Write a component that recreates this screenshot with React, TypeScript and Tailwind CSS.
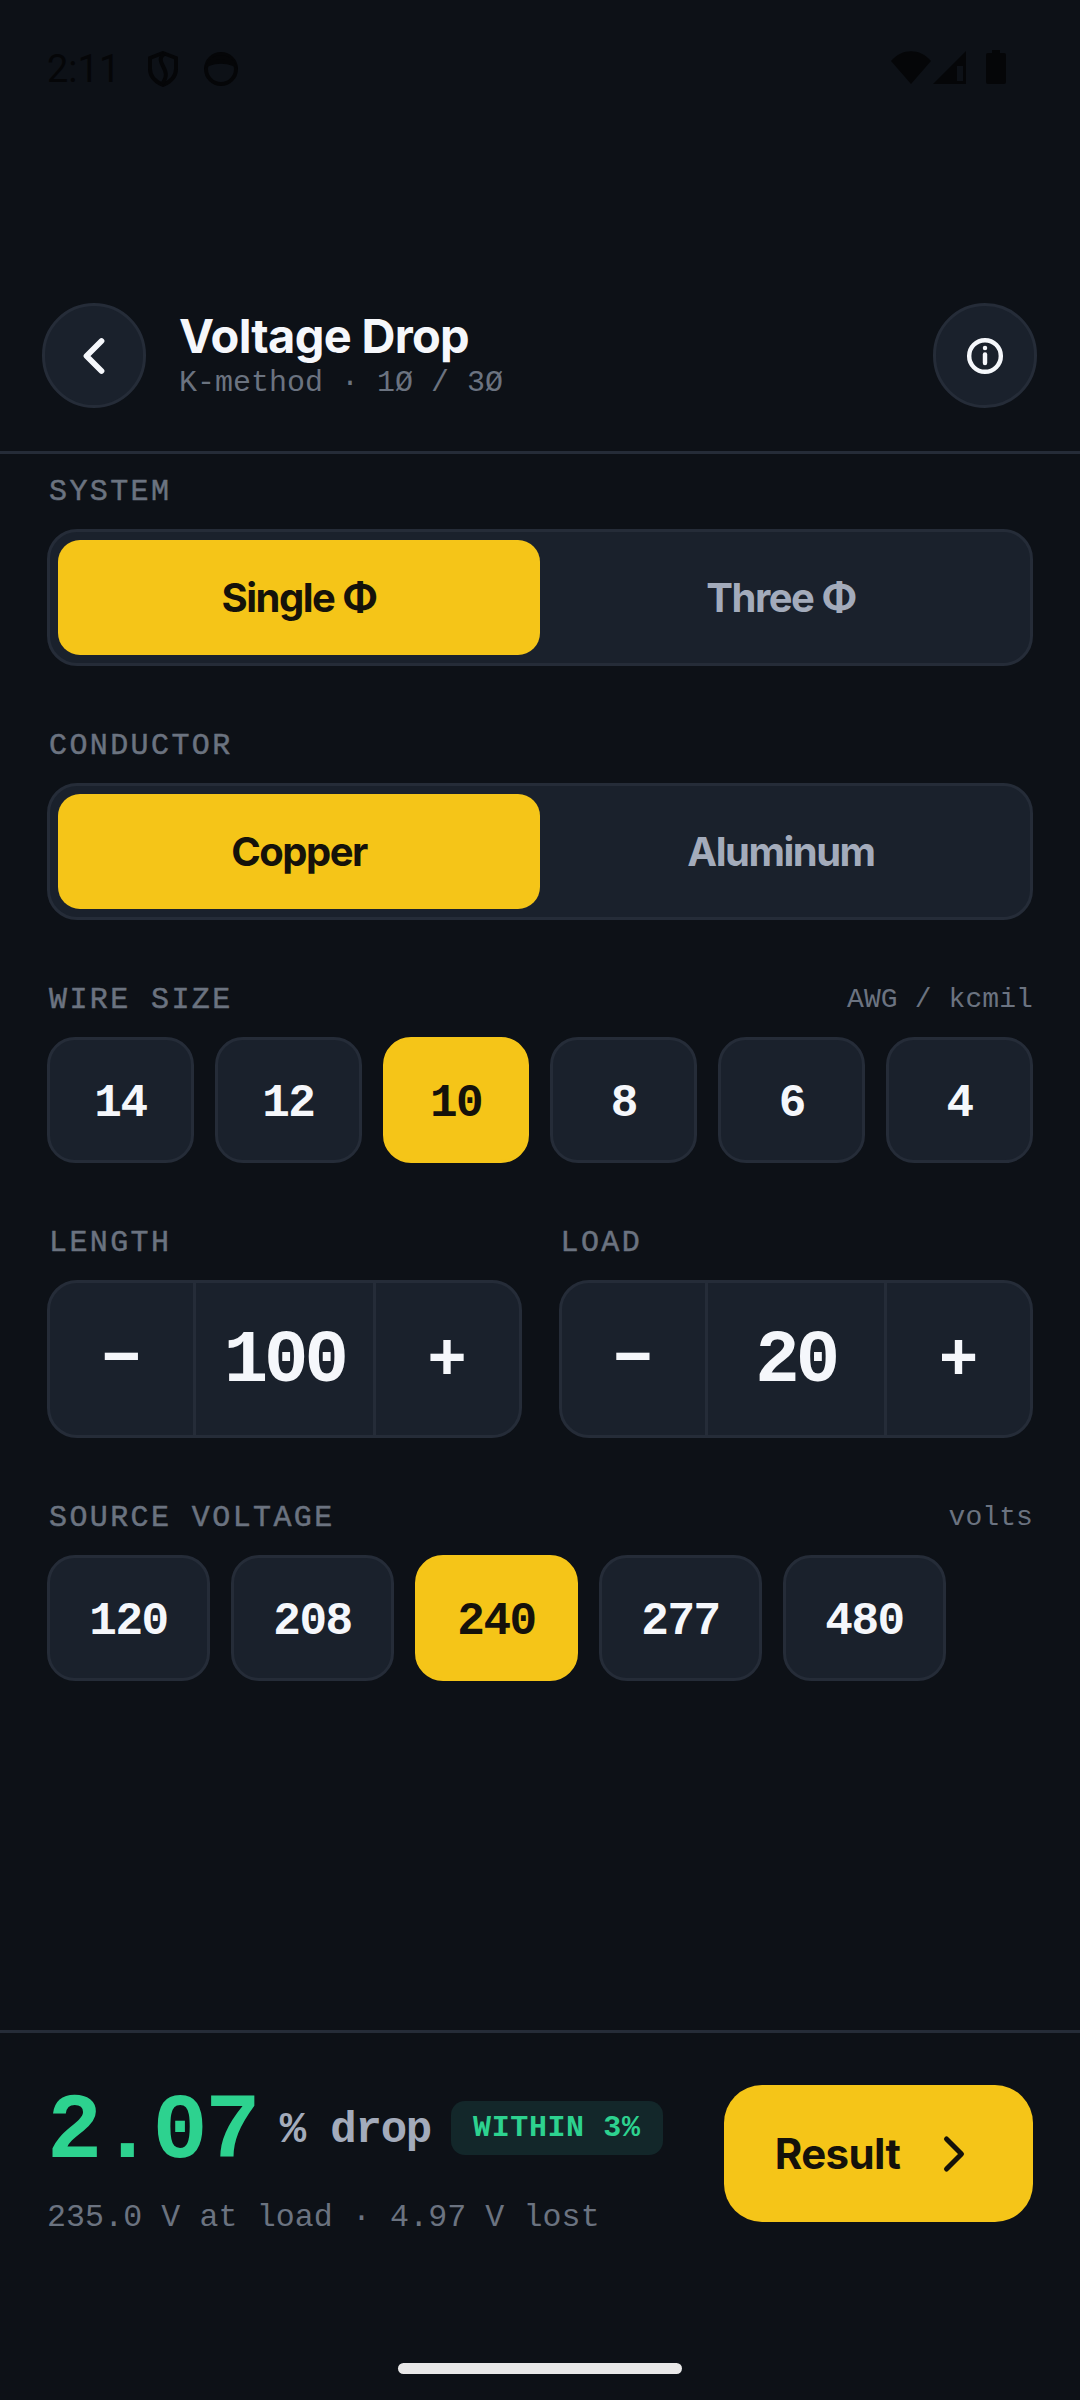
import { ChevronLeft, ChevronRight } from "lucide-react";

const sans = "font-['Inter','Liberation_Sans',sans-serif]";
const mono = "font-['Liberation_Mono',monospace]";

function StatusBar() {
  return (
    <div className="h-[140px] pt-[50px] pl-[47px] pr-[74px] flex items-start justify-between text-[#050608]">
      <div className="flex items-center">
        <span className="font-['Roboto',sans-serif] text-[38px] leading-[38px] w-[101px]">2:11</span>
        <svg width="30" height="36" viewBox="0 0 30 36" fill="none" stroke="currentColor" strokeWidth="4">
          <path d="M15 2 L28 7 V18 C28 26 22 31 15 34 C8 31 2 26 2 18 V7 Z" />
          <path d="M16 3 C5 12 26 18 14 33" />
        </svg>
        <svg className="ml-[26px]" width="34" height="34" viewBox="0 0 34 34" fill="none" stroke="currentColor" strokeWidth="4">
          <circle cx="17" cy="17" r="15" />
          <path d="M5 12 C10 3 24 3 29 12 C22 9 12 9 5 12 Z" fill="currentColor" />
        </svg>
      </div>
      <div className="flex items-center">
        <svg width="40" height="33" viewBox="0 0 40 33" fill="currentColor">
          <path d="M0 10 C11 -3 29 -3 40 10 L20 33 Z" />
        </svg>
        <svg className="ml-[2px]" width="34" height="33" viewBox="0 0 34 33" fill="currentColor">
          <path fillRule="evenodd" d="M33 0 V33 H0 Z M30 15 H24 V30 H30 Z" />
        </svg>
        <svg className="ml-[19px]" width="20" height="34" viewBox="0 0 20 34" fill="currentColor">
          <path d="M6 0 H14 V3 H18 Q20 3 20 5 V32 Q20 34 18 34 H2 Q0 34 0 32 V5 Q0 3 2 3 H6 Z" />
        </svg>
      </div>
    </div>
  );
}

function Label({ text, hint }: { text: string; hint?: string }) {
  return (
    <div className="flex items-center justify-between h-[36px] mb-[21px]">
      <span className={`${mono} text-[30px] leading-[36px] tracking-[2.4px] text-[#6b7380] pl-[2px] pt-[3px] [-webkit-text-stroke:0.5px_#6b7380]`}>{text}</span>
      {hint && <span className={`${mono} text-[28px] leading-[36px] pt-[3px] tracking-[0.1px] text-[#6b7380]`}>{hint}</span>}
    </div>
  );
}

function Segmented({ options }: { options: string[] }) {
  return (
    <div className="h-[137px] p-[8px] flex rounded-[30px] border-[3px] border-[#252c38] bg-[#1a212c]">
      {options.map((opt, i) => (
        <div
          key={opt}
          className={`flex-1 flex items-center justify-center rounded-[22px] ${sans} text-[40px] font-bold tracking-[-1.5px] ${
            i === 0 ? "bg-[#f5c518] text-[#15120a]" : "text-[#a3abbb]"
          }`}
        >
          {opt}
        </div>
      ))}
    </div>
  );
}

function Chip({ value, active, className }: { value: string; active?: boolean; className: string }) {
  return (
    <div
      className={`h-[126px] pt-[8px] flex items-center justify-center rounded-[28px] border-[3px] ${mono} text-[46px] tracking-[-1.5px] font-bold ${className} ${
        active ? "bg-[#f5c518] border-[#f5c518] text-[#15120a]" : "bg-[#1a212c] border-[#252c38] text-[#f5f7fb]"
      }`}
    >
      {value}
    </div>
  );
}

function Stepper({ value }: { value: string }) {
  return (
    <div className={`h-[158px] flex rounded-[30px] border-[3px] border-[#252c38] bg-[#1a212c] text-[#f5f7fb] ${mono} font-bold`}>
      <div className="w-[146px] pt-[3px] flex items-center justify-center text-[66px] border-r-[3px] border-[#252c38]">−</div>
      <div className="flex-1 pt-[5px] flex items-center justify-center text-[74px] tracking-[-4px]">{value}</div>
      <div className="w-[146px] pt-[4px] flex items-center justify-center text-[66px] border-l-[3px] border-[#252c38]">+</div>
    </div>
  );
}

export default function App() {
  return (
    <div className="w-[1080px] h-[2400px] flex flex-col bg-[#0d1117]">
      <StatusBar />

      {/* Header */}
      <header className="pt-[163px] pb-[43px] pl-[42px] pr-[43px] flex items-center border-b-[3px] border-[#252c38]">
        <div className="w-[104px] h-[105px] flex items-center justify-center rounded-full border-[3px] border-[#252c38] bg-[#1a212c] text-[#f5f7fb]">
          <ChevronLeft size={60} strokeWidth={2.3} />
        </div>
        <div className="ml-[33px] flex-1">
          <div className={`${sans} text-[47px] leading-[52px] font-bold tracking-[-0.7px] text-[#f5f7fb]`}>Voltage Drop</div>
          <div className={`${mono} text-[30px] leading-[38px] pt-[2px] text-[#6b7380]`}>K-method · 1Ø / 3Ø</div>
        </div>
        <div className="w-[104px] h-[105px] flex items-center justify-center rounded-full border-[3px] border-[#252c38] bg-[#1a212c] text-[#f5f7fb]">
          <svg width="38" height="38" viewBox="0 0 24 24" fill="none" stroke="currentColor" strokeWidth="2.8" strokeLinecap="round">
            <circle cx="12" cy="12" r="10" />
            <path d="M12 11v5.4" />
            <path d="M12 6.9h.01" />
          </svg>
        </div>
      </header>

      <main className="flex-1 px-[47px] pt-[18px] flex flex-col gap-[60px]">
        <section>
          <Label text="SYSTEM" />
          <Segmented options={["Single Φ", "Three Φ"]} />
        </section>
        <section>
          <Label text="CONDUCTOR" />
          <Segmented options={["Copper", "Aluminum"]} />
        </section>
        <section>
          <Label text="WIRE SIZE" hint="AWG / kcmil" />
          <div className="flex gap-[21px]">
            {["14", "12", "10", "8", "6", "4"].map((v) => (
              <Chip key={v} value={v} active={v === "10"} className="flex-1" />
            ))}
          </div>
        </section>
        <section className="grid grid-cols-2 gap-[37px]">
          <div>
            <Label text="LENGTH" />
            <Stepper value="100" />
          </div>
          <div>
            <Label text="LOAD" />
            <Stepper value="20" />
          </div>
        </section>
        <section>
          <Label text="SOURCE VOLTAGE" hint="volts" />
          <div className="flex gap-[21px]">
            {["120", "208", "240", "277", "480"].map((v) => (
              <Chip key={v} value={v} active={v === "240"} className="w-[163px]" />
            ))}
          </div>
        </section>
      </main>

      {/* Result footer */}
      <footer className="border-t-[3px] border-[#252c38] pt-[52px]">
        <div className="px-[47px] flex items-start justify-between">
          <div>
            <div className="flex items-center h-[88px]">
              <span className={`${mono} text-[92px] leading-[88px] pt-[7px] tracking-[-2.5px] font-bold text-[#2dd28f]`}>2.07</span>
              <span className={`${mono} ml-[22px] pt-[2px] text-[44px] tracking-[-1.2px] font-bold text-[#a3abbb]`}>% drop</span>
              <span className={`${mono} ml-[20px] mb-[2px] h-[54px] px-[22px] flex items-center rounded-[14px] bg-[#13272a] text-[30px] tracking-[0.6px] font-bold text-[#2dd28f]`}>
                WITHIN 3%
              </span>
            </div>
            <div className={`${mono} mt-[25px] text-[31.6px] leading-[40px] tracking-[0.1px] text-[#6b7380]`}>235.0 V at load · 4.97 V lost</div>
          </div>
          <div className="w-[309px] h-[137px] pl-[2px] flex items-center justify-center gap-[24px] rounded-[38px] bg-[#f5c518] text-[#15120a]">
            <span className={`${sans} text-[42px] font-bold tracking-[-0.6px]`}>Result</span>
            <ChevronRight size={60} strokeWidth={2} />
          </div>
        </div>
        <div className="mt-[125px] mb-[26px] mx-auto w-[284px] h-[11px] rounded-full bg-[#e8e8e8]" />
      </footer>
    </div>
  );
}
